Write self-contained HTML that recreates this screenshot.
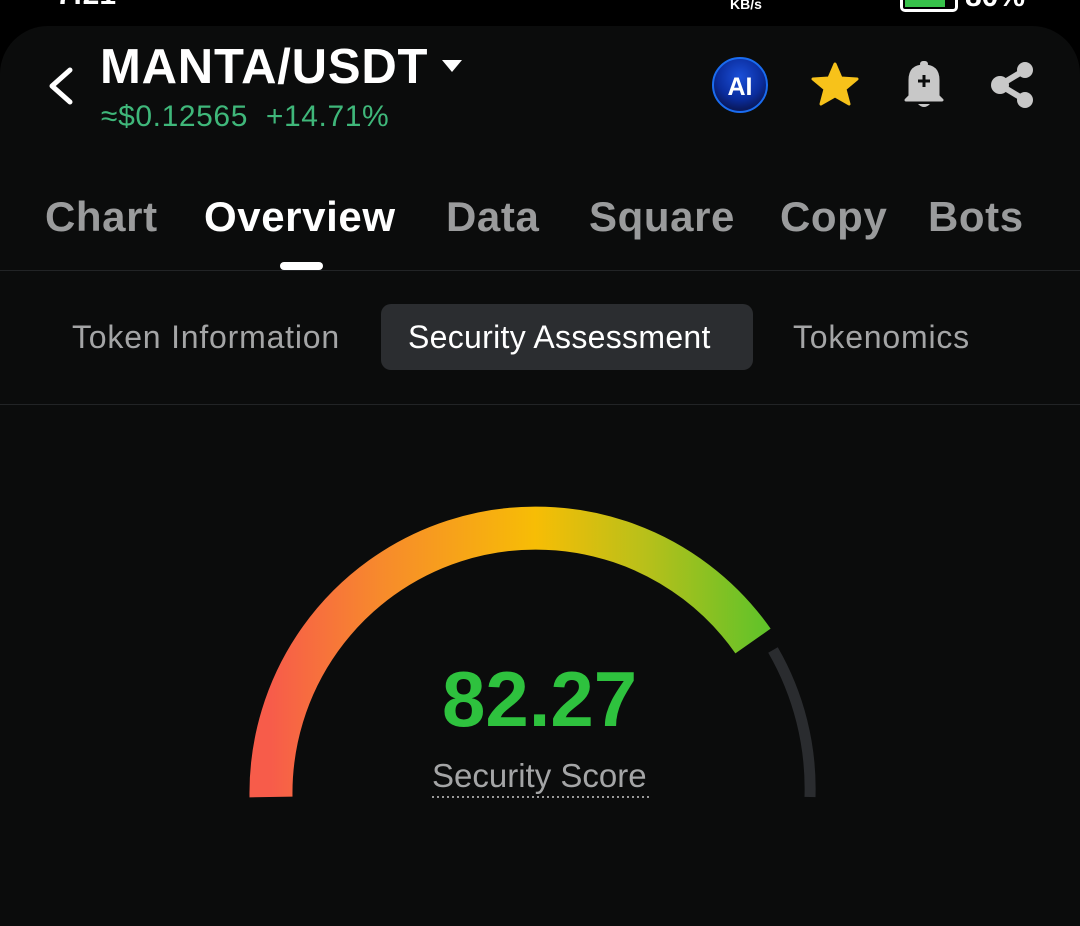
<!DOCTYPE html>
<html><head><meta charset="utf-8"><style>
body{margin:0;width:1080px;height:862px;background:#000;overflow:hidden;font-family:"Liberation Sans",sans-serif;position:relative}
.card{position:absolute;left:0;top:26px;width:1080px;height:900px;background:#0b0c0c;border-radius:48px 48px 0 0}
.t{position:absolute;white-space:nowrap}
.tab{font-size:42px;font-weight:bold;color:#9a9b9c;top:193px;letter-spacing:0.6px}
.sub{font-size:32px;top:319px;color:#a4a5a6;letter-spacing:0.8px}
</style></head><body>
<div class="t" style="left:56px;top:-22px;color:#fff;font-size:30px;font-weight:bold">7:21 ••</div>
<div class="t" style="left:730px;top:-4px;color:#fff;font-size:14px;font-weight:bold">KB/s</div>
<div style="position:absolute;left:900px;top:-10px;width:52px;height:16px;border:3px solid #fff;border-radius:5px"><div style="margin:2px;height:12px;width:40px;background:#37c24a"></div></div>
<div class="t" style="left:965px;top:-20px;color:#fff;font-size:30px;font-weight:bold">80%</div>
<div class="card"></div>
<svg style="position:absolute;left:0;top:0" width="1080" height="862">
<path d="M70 70 L52 86 L70 102" fill="none" stroke="#fff" stroke-width="5" stroke-linecap="round" stroke-linejoin="round"/>
<path d="M442 60 L462 60 L452 72 Z" fill="#fff"/>
<defs><radialGradient id="ai" cx="50%" cy="35%" r="60%"><stop offset="0" stop-color="#1b4fd8"/><stop offset="0.7" stop-color="#0a2c9c"/><stop offset="1" stop-color="#0a1a60"/></radialGradient>
<linearGradient id="g" x1="271" y1="0" x2="770" y2="0" gradientUnits="userSpaceOnUse"><stop offset="0" stop-color="#f75c4a"/><stop offset="0.22" stop-color="#f78a2c"/><stop offset="0.53" stop-color="#f7bd05"/><stop offset="0.75" stop-color="#b8c01a"/><stop offset="1" stop-color="#5ec22a"/></linearGradient></defs>
<circle cx="740" cy="85" r="27" fill="url(#ai)" stroke="#1a6cf0" stroke-width="2"/>
<text x="740" y="95" text-anchor="middle" fill="#fff" font-size="25" font-weight="bold" font-family="Liberation Sans">AI</text>
<path d="M835 64 L841 78 L857 79 L845 89 L849 104 L835 96 L821 104 L825 89 L813 79 L829 78 Z" fill="#f7c21a" stroke="#f7c21a" stroke-width="3" stroke-linejoin="round"/>
<path d="M910 96 L910 80 Q910 66 924 66 Q938 66 938 80 L938 96 L942 100 L906 100 Z" fill="#c8c8c8" stroke="#c8c8c8" stroke-width="3" stroke-linejoin="round"/>
<rect x="920" y="61" width="8" height="6" rx="3" fill="#c8c8c8"/>
<path d="M918 104 Q924 110 930 104 Z" fill="#c8c8c8"/>
<path d="M924 75 V87 M918 81 H930" stroke="#0b0c0c" stroke-width="3"/>
<path d="M1000 85 L1025 70 M1000 85 L1025 100" stroke="#c8c8c8" stroke-width="6"/>
<circle cx="1025" cy="70" r="8" fill="#c8c8c8"/><circle cx="1025" cy="100" r="8" fill="#c8c8c8"/><circle cx="1000" cy="85" r="9" fill="#c8c8c8"/>
<rect x="280" y="262" width="43" height="8" rx="4" fill="#fff"/>
<rect x="0" y="270" width="1080" height="1" fill="#222426"/>
<rect x="0" y="404" width="1080" height="1" fill="#222426"/>
<rect x="381" y="304" width="372" height="66" rx="10" fill="#2b2d30"/>
<path d="M271 797 A265 265 0 0 1 753 641" fill="none" stroke="url(#g)" stroke-width="43"/>
<path d="M773 650 A277 277 0 0 1 810 797" fill="none" stroke="#2a2c2f" stroke-width="11"/>
<line x1="432" y1="797" x2="650" y2="797" stroke="#9a9a9a" stroke-width="2" stroke-dasharray="2 3"/>
</svg>
<div class="t" style="left:100px;top:39px;color:#fff;font-size:49px;font-weight:bold;letter-spacing:0.8px">MANTA/USDT</div>
<div class="t" style="left:101px;top:100px;color:#3fb77a;font-size:30px;letter-spacing:0.6px">≈$0.12565&nbsp; +14.71%</div>
<div class="t tab" style="left:45px">Chart</div>
<div class="t tab" style="left:204px;color:#fff">Overview</div>
<div class="t tab" style="left:446px">Data</div>
<div class="t tab" style="left:589px">Square</div>
<div class="t tab" style="left:780px">Copy</div>
<div class="t tab" style="left:928px">Bots</div>
<div class="t sub" style="left:72px">Token Information</div>
<div class="t sub" style="left:408px;color:#fff;letter-spacing:0.3px">Security Assessment</div>
<div class="t sub" style="left:793px">Tokenomics</div>
<div class="t" style="left:442px;top:654px;color:#2ec23e;font-size:78px;font-weight:bold;letter-spacing:0px">82.27</div>
<div class="t" style="left:432px;top:757px;color:#a4a5a6;font-size:33px">Security Score</div>
</body></html>
